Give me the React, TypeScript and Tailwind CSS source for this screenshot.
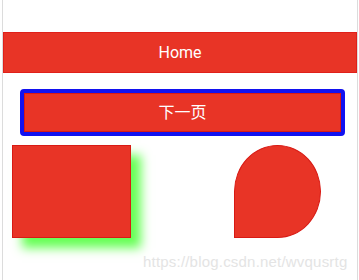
export default function App() {
  return (
    <div className="relative h-[280px] w-[359px] overflow-hidden bg-white font-['Roboto','Noto_Sans_CJK_SC',sans-serif]">
      <div className="ml-[2px] h-full w-[356px] border-x border-[#dcdcdc] pt-[32px]">
        {/* Header */}
        <div className="flex h-[41px] items-center justify-center border border-[#e0201a] bg-[#e83426] text-[16px] text-white">
          Home
        </div>

        {/* Next page button */}
        <div className="ml-[17px] mt-[16px] h-[47px] w-[325px] rounded-[4px] border-[4px] border-[#1212f0]">
          <div className="flex h-full items-center justify-center border border-[#d81a14] bg-[#e83426] pt-[1px] text-[16px] text-white">
            下一页
          </div>
        </div>

        {/* Shapes */}
        <div className="mt-[9px] flex items-start">
          <div className="ml-[9px] h-[93px] w-[119px] border border-[#d81a14] bg-[#e83426] shadow-[10px_10px_10px_#66ff55]" />
          <div className="ml-[103px] h-[93px] w-[87px] rounded-[50%_50%_50%_0] border border-[#d81a14] bg-[#e83426]" />
        </div>
      </div>

      <span className="absolute left-[143px] top-[251px] font-['Liberation_Sans',sans-serif] text-[15px] tracking-[0.2px] text-[#e4e4e4]">
        https://blog.csdn.net/wvqusrtg
      </span>
    </div>
  );
}
